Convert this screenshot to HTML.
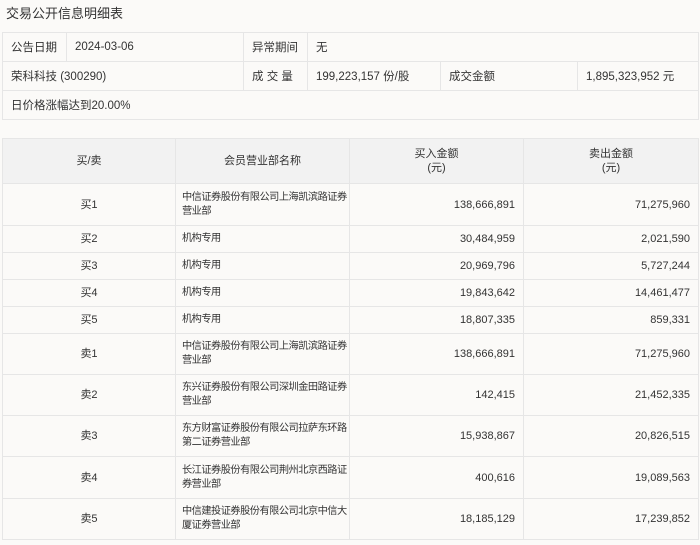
<!DOCTYPE html>
<html><head><meta charset="utf-8"><style>
body{margin:0;background:#fbfaf8;font-family:"Liberation Sans","Noto Sans CJK SC",sans-serif;color:#333;width:700px;height:545px;overflow:hidden;position:relative}
.t{position:absolute;left:6px;top:3px;font-size:13px;color:#333}
table{position:absolute;border-collapse:collapse;table-layout:fixed;font-size:11px}
td{border:1px solid #e6e6e6;padding:0}
#a{left:2px;top:32px;width:696px;background:#fbfaf8}
#a td{height:28px;padding-left:8px;font-size:11.5px}
#b{left:2px;top:138px;width:696px}
#b td{line-height:14px}
#b .h td{background:#f2f2f2;text-align:center;height:44px}
#b td.c{text-align:center}
#b td.n{padding:0 0 0 6px;white-space:nowrap;font-size:10.2px;letter-spacing:-0.5px}
#b td.r{text-align:right;padding-right:8px}
</style></head><body>
<div class="t">交易公开信息明细表</div>
<table id="a">
<colgroup><col style="width:64px"><col style="width:177px"><col style="width:64px"><col style="width:133px"><col style="width:137px"><col style="width:121px"></colgroup>
<tr><td>公告日期</td><td>2024-03-06</td><td>异常期间</td><td colspan="3">无</td></tr>
<tr><td colspan="2">荣科科技 (300290)</td><td>成 交 量</td><td>199,223,157 份/股</td><td>成交金额</td><td>1,895,323,952 元</td></tr>
<tr><td colspan="6">日价格涨幅达到20.00%</td></tr>
</table>
<table id="b">
<colgroup><col style="width:173px"><col style="width:174px"><col style="width:174px"><col style="width:175px"></colgroup>
<tr class="h"><td>买/卖</td><td>会员营业部名称</td><td>买入金额<br>(元)</td><td>卖出金额<br>(元)</td></tr>
<tr style="height:42px"><td class="c">买1</td><td class="n">中信证券股份有限公司上海凯滨路证券<br>营业部</td><td class="r">138,666,891</td><td class="r">71,275,960</td></tr>
<tr style="height:27px"><td class="c">买2</td><td class="n">机构专用</td><td class="r">30,484,959</td><td class="r">2,021,590</td></tr>
<tr style="height:27px"><td class="c">买3</td><td class="n">机构专用</td><td class="r">20,969,796</td><td class="r">5,727,244</td></tr>
<tr style="height:27px"><td class="c">买4</td><td class="n">机构专用</td><td class="r">19,843,642</td><td class="r">14,461,477</td></tr>
<tr style="height:27px"><td class="c">买5</td><td class="n">机构专用</td><td class="r">18,807,335</td><td class="r">859,331</td></tr>
<tr style="height:41px"><td class="c">卖1</td><td class="n">中信证券股份有限公司上海凯滨路证券<br>营业部</td><td class="r">138,666,891</td><td class="r">71,275,960</td></tr>
<tr style="height:41px"><td class="c">卖2</td><td class="n">东兴证券股份有限公司深圳金田路证券<br>营业部</td><td class="r">142,415</td><td class="r">21,452,335</td></tr>
<tr style="height:41px"><td class="c">卖3</td><td class="n">东方财富证券股份有限公司拉萨东环路<br>第二证券营业部</td><td class="r">15,938,867</td><td class="r">20,826,515</td></tr>
<tr style="height:42px"><td class="c">卖4</td><td class="n">长江证券股份有限公司荆州北京西路证<br>券营业部</td><td class="r">400,616</td><td class="r">19,089,563</td></tr>
<tr style="height:41px"><td class="c">卖5</td><td class="n">中信建投证券股份有限公司北京中信大<br>厦证券营业部</td><td class="r">18,185,129</td><td class="r">17,239,852</td></tr>
</table>
</body></html>
